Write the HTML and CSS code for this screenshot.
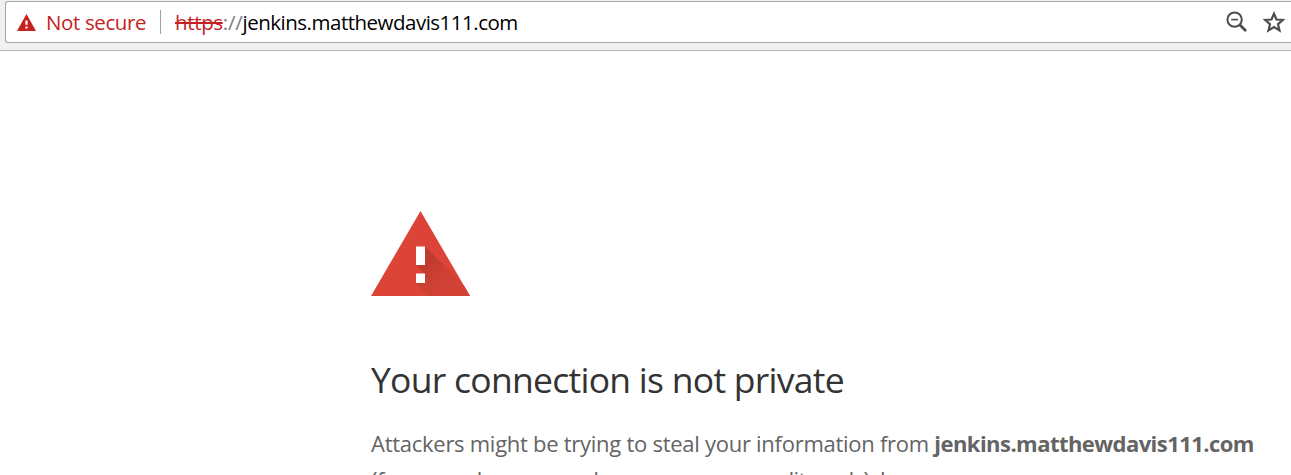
FILE: index.html
```
<!DOCTYPE html>
<html lang="en">
<head>
<meta charset="utf-8">
<title>Privacy error</title>
<link rel="stylesheet" href="styles.css">
</head>
<body>
<header class="toolbar">
  <div class="omnibox">
    <svg class="warn" width="19" height="17" viewBox="0 0 19 17"><path d="M9.5 0L19 17H0z" fill="#c5221f"/><path d="M8.4 6.4h2.2v4.4H8.4zM8.4 12.4h2.2v2.2H8.4z" fill="#fff"/></svg>
    <span class="status">Not secure</span>
    <span class="divider"></span>
    <span class="url"><span class="scheme">https</span><span class="slashes">://</span><span class="host">jenkins.matthewdavis111.com</span></span>
    <svg class="zoom" width="22" height="22" viewBox="0 0 22 22" fill="none" stroke="#4d4d4d"><circle cx="8.6" cy="8.6" r="7.2" stroke-width="2"/><path d="M5.2 8.6h6.8" stroke-width="1.6"/><path d="M14 14l6 6" stroke-width="2.8"/></svg>
    <svg class="star" width="22" height="22" viewBox="0 0 22 22" fill="none" stroke="#4d4d4d" stroke-width="2.2"><path d="M11 2.8l2.5 5.7 6.2.5-4.7 4.2 1.5 6.2L11 16.1l-5.5 3.3L7 13.2 2.3 9l6.2-.5z"/></svg>
  </div>
</header>
<main class="page">
  <svg class="alert" width="99" height="85" viewBox="0 0 99 85">
    <defs>
      <linearGradient id="shade" gradientUnits="userSpaceOnUse" x1="50" y1="50" x2="74" y2="74"><stop offset="0" stop-color="#be3a2f"/><stop offset="1" stop-color="#d34135"/></linearGradient>
      <clipPath id="tri"><path d="M49.5 0L99 85H0z"/></clipPath>
    </defs>
    <path d="M49.5 0L99 85H0z" fill="#db4437"/>
    <path d="M54 35.5L104 85.5H58.5L45 72l9-9-9-9z" fill="url(#shade)" clip-path="url(#tri)"/>
    <path d="M45 35.5h9V54h-9zM45 62.5h9V72h-9z" fill="#fff"/>
  </svg>
  <h1 class="title">Your connection is not private</h1>
  <p class="message"><span class="line">Attackers might be trying to steal your information from <strong class="site">jenkins.matthewdavis111.com</strong></span><span class="line second">(for example, passwords, messages, or credit cards). Learn more</span></p>
</main>
</body>
</html>
```
FILE: styles.css
```
body {
  margin: 0;
  height: 475px;
  overflow: hidden;
  background: #fff;
  font-family: "Open Sans", "Noto Sans", sans-serif;
}
.toolbar {
  box-sizing: border-box;
  height: 51px;
  padding: 1px 0 0 5px;
  background: #f1f1f1;
  border-bottom: 1px solid #b4b4b4;
}
.omnibox {
  box-sizing: border-box;
  display: flex;
  align-items: center;
  height: 42px;
  padding-left: 11px;
  padding-right: 6px;
  background: #fff;
  border: 1px solid #a6a6a6;
  border-right: 0;
  border-radius: 3px 0 0 3px;
  font-size: 20.5px;
  line-height: 38px;
  white-space: nowrap;
}
.status {
  margin-left: 10px;
  width: 101px;
  color: #c5221f;
  letter-spacing: -0.38px;
}
.divider {
  width: 1px;
  height: 24px;
  margin: 0 14px 0 13px;
  background: #a0a0a0;
}
.url {
  flex: 1;
  color: #000;
  letter-spacing: -0.5px;
}
.scheme {
  color: #c5221f;
  letter-spacing: -0.35px;
  text-decoration: line-through;
}
.slashes {
  color: #808080;
  letter-spacing: -0.2px;
}
.star { margin-left: 15px; }
.page { padding: 160px 0 0 371px; }
.alert { display: block; }
.title {
  margin: 58px 0 0;
  color: #333;
  font-size: 35.5px;
  font-weight: 400;
  line-height: 50px;
  letter-spacing: -0.73px;
  white-space: nowrap;
}
.message {
  margin: 21px 0 0;
  color: #646464;
  font-size: 22px;
  line-height: 36px;
  letter-spacing: -0.27px;
  white-space: nowrap;
}
.line { display: block; }
.second {
  letter-spacing: -0.6px;
}
.site {
  font-weight: 700;
  letter-spacing: -0.55px;
}
```
